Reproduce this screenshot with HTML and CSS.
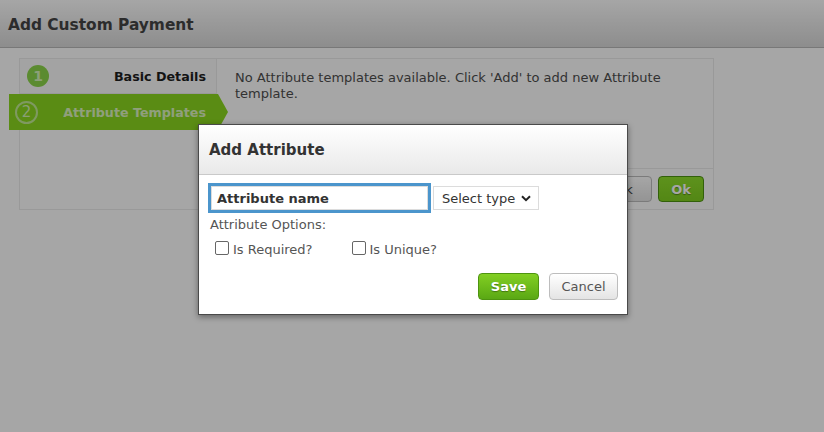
FILE: index.html
```html
<!DOCTYPE html>
<html>
<head>
<meta charset="utf-8">
<link rel="stylesheet" href="styles.css">
</head>
<body>
<div class="page">
  <header class="page-header"><h1>Add Custom Payment</h1></header>
  <div class="wizard">
    <div class="steps">
      <div class="step step-done"><span class="step-num">1</span><span class="step-label">Basic Details</span></div>
      <div class="step step-active"><span class="step-num">2</span><span class="step-label">Attribute Templates</span></div>
    </div>
    <div class="wizard-main">
      <p class="wizard-text">No Attribute templates available. Click 'Add' to add new Attribute template.</p>
      <div class="wizard-footer">
        <button class="btn btn-gray">Back</button>
        <button class="btn btn-green">Ok</button>
      </div>
    </div>
  </div>
</div>
<div class="overlay"></div>
<div class="dialog">
  <div class="dialog-header"><h2>Add Attribute</h2></div>
  <div class="dialog-body">
    <div class="field-row">
      <div class="name-input">Attribute name</div>
      <div class="type-select">Select type
        <svg class="chev" width="10" height="7" viewBox="0 0 10 7"><path d="M1 1.2 L5 5.2 L9 1.2" fill="none" stroke="#222" stroke-width="2"/></svg>
      </div>
    </div>
    <div class="options-label">Attribute Options:</div>
    <div class="options">
      <label class="check"><span class="box"></span>Is Required?</label>
      <label class="check"><span class="box"></span>Is Unique?</label>
    </div>
    <div class="dialog-actions">
      <button class="btn btn-green btn-save">Save</button>
      <button class="btn btn-gray btn-cancel">Cancel</button>
    </div>
  </div>
</div>
</body>
</html>
```
FILE: styles.css
```css
html, body {
  margin: 0;
  padding: 0;
}
body {
  width: 824px;
  height: 432px;
  overflow: hidden;
  background: #ffffff;
  font-family: "DejaVu Sans", Verdana, sans-serif;
  position: relative;
}
.page-header {
  height: 48px;
  box-sizing: border-box;
  padding: 3px 0 0 8px;
  background: linear-gradient(#ffffff, #d9d9d9);
  border-bottom: 1px solid #b8b8b8;
  display: flex;
  align-items: center;
}
.page-header h1 {
  margin: 0;
  font-size: 15.4px;
  font-weight: bold;
  color: #444;
}
.wizard {
  margin: 10px 0 0 19px;
  width: 693px;
  height: 150px;
  border: 1px solid #ebebeb;
  display: flex;
}
.steps {
  width: 196px;
  flex: none;
  border-right: 1px solid #ebebeb;
  display: flex;
  flex-direction: column;
}
.step {
  height: 35px;
  display: flex;
  align-items: center;
  justify-content: space-between;
  box-sizing: border-box;
}
.step-done {
  padding: 0 10px 0 7px;
  border-bottom: 1px solid #ebebeb;
  background: #fbfbfb;
}
.step-num {
  width: 22px;
  height: 22px;
  border-radius: 50%;
  box-sizing: border-box;
  display: flex;
  align-items: center;
  justify-content: center;
  font-size: 14px;
  font-weight: bold;
}
.step-done .step-num {
  background: #8dd64a;
  color: #d8f5bb;
}
.step-label {
  font-size: 12.7px;
  font-weight: bold;
  color: #1e1e1e;
}
.step-active {
  height: 36px;
  margin-left: -11px;
  margin-right: -2px;
  padding: 0 12px 0 6px;
  background: #8ad820;
  position: relative;
}
.step-active::after {
  content: "";
  position: absolute;
  right: -10px;
  top: 0;
  border-top: 18px solid transparent;
  border-bottom: 18px solid transparent;
  border-left: 10px solid #8ad820;
}
.step-active .step-num {
  border: 2px solid #c4ec96;
  color: #d6f3b5;
  width: 23px;
  height: 23px;
  font-weight: normal;
  font-size: 15px;
}
.step-active .step-label {
  color: #f0fbe4;
  opacity: 0.82;
}
.wizard-main {
  flex: 1;
  display: flex;
  flex-direction: column;
}
.wizard-text {
  margin: 0;
  padding: 11px 30px 0 18px;
  font-size: 13px;
  line-height: 16px;
  color: #4e4e4e;
  flex: 1;
}
.wizard-footer {
  height: 40px;
  border-top: 1px solid #ebebeb;
  display: flex;
  justify-content: flex-end;
  align-items: center;
  gap: 6px;
  padding-right: 9px;
}
.btn {
  font-family: "DejaVu Sans", Verdana, sans-serif;
  border-radius: 4px;
  height: 26px;
  padding: 0 10px;
  font-size: 13px;
  cursor: pointer;
}
.btn-gray {
  background: linear-gradient(#ffffff, #e4e4e4);
  border: 1px solid #bdbdbd;
  color: #444;
}
.btn-green {
  background: linear-gradient(#82cf22, #5aa814);
  border: 1px solid #4e9410;
  color: #ffffff;
  font-weight: bold;
  text-shadow: 0 1px 1px rgba(0,0,0,0.35);
}
.wizard-footer .btn-green {
  background: linear-gradient(#90e02c, #80d020);
  color: #fff;
  height: 26px;
  width: 46px;
  padding: 0;
}
.wizard-footer .btn-gray {
  width: 70px;
}
.overlay {
  position: absolute;
  inset: 0;
  background: rgba(0,0,0,0.35);
}
.dialog {
  position: absolute;
  left: 198px;
  top: 124px;
  width: 428px;
  height: 189px;
  background: #fff;
  border: 1px solid #4a4a4a;
  box-shadow: 0 2px 6px rgba(0,0,0,0.4);
  display: flex;
  flex-direction: column;
}
.dialog-header {
  height: 49px;
  background: linear-gradient(#ffffff, #e9e9e9);
  border-bottom: 1px solid #c9c9c9;
  display: flex;
  align-items: center;
  padding-left: 10px;
}
.dialog-header h2 {
  margin: 0;
  font-size: 15px;
  font-weight: bold;
  color: #333;
}
.dialog-body {
  padding: 8px 9px 0 9px;
  display: flex;
  flex-direction: column;
}
.field-row {
  display: flex;
  align-items: center;
  gap: 2px;
}
.name-input {
  width: 223px;
  height: 30px;
  box-sizing: border-box;
  border: 3px solid #4b95cc;
  box-shadow: inset 0 0 0 1px #dcdcdc;
  padding-left: 6px;
  display: flex;
  align-items: center;
  font-size: 13px;
  font-weight: bold;
  color: #333;
}
.type-select {
  width: 106px;
  height: 24px;
  box-sizing: border-box;
  border: 1px solid #dcdcdc;
  padding: 0 0 0 8px;
  display: flex;
  align-items: center;
  gap: 6px;
  font-size: 13px;
  color: #333;
}
.options-label {
  margin-top: 3px;
  padding-left: 2px;
  font-size: 13px;
  color: #555;
  line-height: 17px;
}
.options {
  display: flex;
  gap: 39px;
  padding-left: 7px;
  margin-top: 9px;
}
.check {
  display: flex;
  align-items: center;
  gap: 4px;
  font-size: 13px;
  color: #555;
}
.box {
  width: 14px;
  height: 14px;
  box-sizing: border-box;
  border: 1px solid #666;
  border-radius: 2px;
  background: #fff;
  margin-top: -3px;
}
.dialog-actions {
  margin-top: 16px;
  display: flex;
  justify-content: flex-end;
  gap: 10px;
}
.btn-save {
  width: 61px;
  height: 27px;
  padding: 0;
  font-size: 13px;
}
.btn-cancel {
  width: 69px;
  height: 27px;
  padding: 0;
  color: #555;
}
```
